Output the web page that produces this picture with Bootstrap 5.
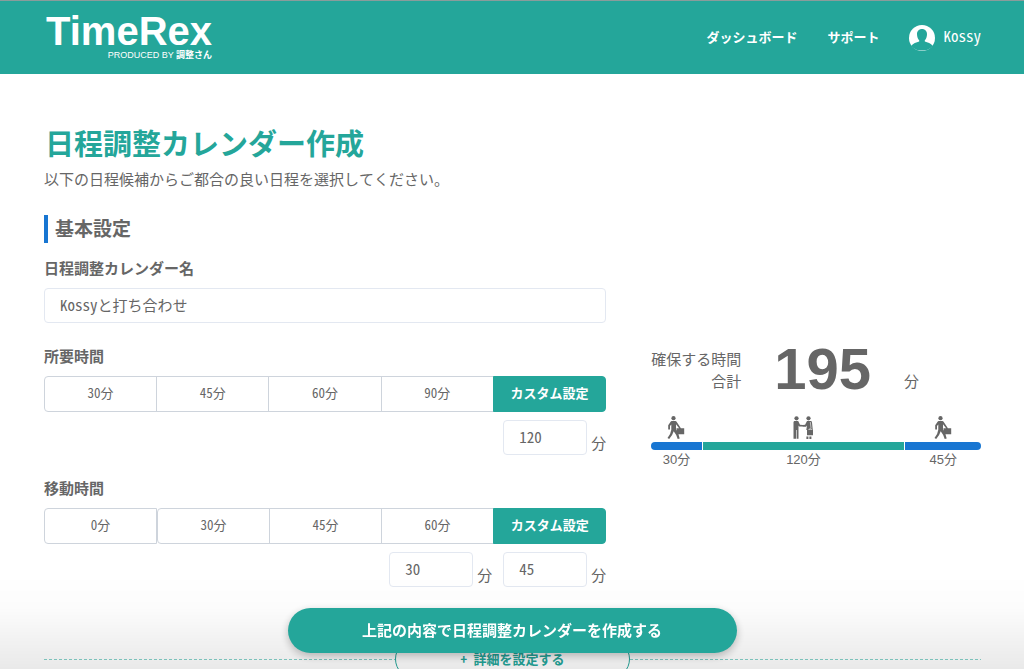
<!DOCTYPE html>
<html lang="ja">
<head>
<meta charset="utf-8">
<meta name="viewport" content="width=device-width, initial-scale=1">
<title>TimeRex</title>
<link href="https://cdn.jsdelivr.net/npm/bootstrap@5.3.0/dist/css/bootstrap.min.css" rel="stylesheet">
<style>
  :root { --rex: #24a69a; --rex-blue: #1876d2; --ink: #666; --edge: #ced4dc; }
  body { font-family: "Noto Sans Mono CJK JP", "Noto Sans CJK JP", sans-serif; font-size: 15px; line-height: 22px; font-weight: 500; color: var(--ink); }
  .latin { font-family: "Liberation Sans", "Noto Sans CJK JP", sans-serif; }
  .gutter { padding-left: 44px; padding-right: 43px; }
  .topbar { background: var(--rex); border-top: 1px solid #8a9c9b; height: 74px; }
  .topbar a { color: #fff; text-decoration: none; }
  .brand-link { padding: 0 0 2px 2px; }
  .brand-name { font-size: 40px; line-height: 36px; font-weight: 700; }
  .brand-sub { font-size: 9px; line-height: 12px; font-weight: 400; }
  .topnav { gap: 30px; }
  .nav-text { font-size: 13px; line-height: 20px; padding-bottom: 2px; font-weight: 700; }
  .user-name { padding-bottom: 4px; }
  .page { min-height: 0; scrollbar-width: none; padding-top: 50px; }
  .page::-webkit-scrollbar { display: none; }
  .page-title { font-size: 29px; line-height: 36px; font-weight: 700; color: var(--rex); padding-left: 1px; }
  .section-title { font-size: 19px; line-height: 26px; font-weight: 700; border-left: 4px solid var(--rex-blue); padding: 0 0 2px 7px; margin: 25px 0 14px; }
  .planner { display: grid; grid-template-columns: 3fr 2fr; }
  .field-title { font-size: 15px; line-height: 22px; font-weight: 700; margin: 0 0 9px; display: block; float: none; }
  .field { margin-bottom: 22px; }
  .form-control { height: 35px; font-size: 15px; font-weight: 500; color: var(--ink); border-color: #e3e8f1; border-radius: 4px; padding: 0 15px 2px; }
  .minutes { width: 84px; }
  .choices .btn { flex: 1 1 0; width: 0; height: 36px; padding: 5px 0 7px; font-size: 13px; line-height: 22px; font-weight: 500; color: var(--ink); border-color: var(--edge); background: #fff; border-radius: 4px; }
  .choices .btn-check:checked + .btn { background: var(--rex); border-color: var(--rex); color: #fff; font-weight: 700; }
  .choices .btn.lone { border-top-right-radius: 4px; border-bottom-right-radius: 4px; }
  .choices .btn.lone + .btn-check + .btn { border-top-left-radius: 4px; border-bottom-left-radius: 4px; margin-left: 0; }
  .customs { gap: 11px; margin-top: 8px; }
  .unit { gap: 4px; }
  .unit label { padding-bottom: 1px; }
  .summary { padding: 90px 0 0 45px; }
  .total { gap: 33px; }
  .total-num { font-size: 58px; line-height: 44px; font-weight: 700; padding-bottom: 1px; }
  .timeline { margin-top: 24px; gap: 1px; font-size: 13px; line-height: 20px; font-weight: 400; }
  .timeline .slot { flex-basis: 0; min-width: 0; text-align: center; }
  .timeline svg { display: block; height: 24px; margin: 0 auto 2px; fill: var(--ink); }
  .timeline .stripe { height: 8px; background: var(--rex-blue); }
  .timeline .meet .stripe { background: var(--rex); }
  .timeline .slot:first-child .stripe { border-radius: 4px 0 0 4px; }
  .timeline .slot:last-child .stripe { border-radius: 0 4px 4px 0; }
  .more { margin-top: 52px; }
  .more::before, .more::after { content: ""; flex: 1; height: 1px; background: repeating-linear-gradient(90deg, #86d2cb 0 3px, transparent 3px 5px); }
  .more-btn { width: 235px; height: 40px; border: 1px solid var(--rex); border-radius: 20px; color: var(--rex); background: #fff; font-size: 13px; font-weight: 700; }
  .submit-shade { padding: 34px 0 16px; background: linear-gradient(rgba(0,0,0,0), rgba(0,0,0,.01) 35%, rgba(0,0,0,.085)); }
  .submit-btn { width: 449px; height: 45px; padding-bottom: 2px; border: 0; border-radius: 23px; background: var(--rex); color: #fff; font-size: 15px; font-weight: 700; box-shadow: 0 3px 8px rgba(0,0,0,.25); }
</style>
</head>
<body class="vh-100 d-flex flex-column overflow-hidden">
<header class="topbar gutter d-flex justify-content-between align-items-center flex-shrink-0">
  <a href="#" class="brand-link latin text-end">
    <div class="brand-name">TimeRex</div>
    <div class="brand-sub">PRODUCED BY <b>調整さん</b></div>
  </a>
  <nav class="topnav d-flex align-items-center">
    <a href="#" class="nav-text">ダッシュボード</a>
    <a href="#" class="nav-text">サポート</a>
    <a href="#" class="d-flex align-items-center gap-2">
      <svg width="26" height="26" viewBox="0 0 26 26" aria-hidden="true"><circle cx="13" cy="13" r="13" fill="#fff"/><path d="M13 4c3 0 5 2.100 5 5.200 0 2.400-.9 4.800-2.200 6v1.300c2.800.8 6.200 1.800 8 4.500A13.200 13.200 0 0 1 13 25.500 13.200 13.200 0 0 1 2.200 21c1.800-2.700 5.200-3.700 8-4.500v-1.300C8.900 14 8 11.600 8 9.200 8 6.100 10 4 13 4z" fill="#24a69a"/></svg>
      <span class="user-name">Kossy</span>
    </a>
  </nav>
</header>

<main class="page gutter flex-fill overflow-auto">
  <h1 class="page-title mb-2">日程調整カレンダー作成</h1>
  <p class="mb-0">以下の日程候補からご都合の良い日程を選択してください。</p>
  <h2 class="section-title">基本設定</h2>

  <div class="planner">
    <form>
      <div class="field">
        <label class="field-title" for="calName">日程調整カレンダー名</label>
        <input class="form-control" id="calName" type="text" value="Kossyと打ち合わせ">
      </div>

      <fieldset class="field">
        <legend class="field-title">所要時間</legend>
        <div class="btn-group choices d-flex">
          <input class="btn-check" type="radio" name="dur" id="d30"><label class="btn" for="d30">30分</label>
          <input class="btn-check" type="radio" name="dur" id="d45"><label class="btn" for="d45">45分</label>
          <input class="btn-check" type="radio" name="dur" id="d60"><label class="btn" for="d60">60分</label>
          <input class="btn-check" type="radio" name="dur" id="d90"><label class="btn" for="d90">90分</label>
          <input class="btn-check" type="radio" name="dur" id="dc" checked><label class="btn" for="dc">カスタム設定</label>
        </div>
        <div class="customs d-flex justify-content-end">
          <div class="unit d-flex align-items-end"><input class="form-control minutes" id="durMin" type="text" value="120"><label for="durMin">分</label></div>
        </div>
      </fieldset>

      <fieldset>
        <legend class="field-title">移動時間</legend>
        <div class="btn-group choices d-flex">
          <input class="btn-check" type="radio" name="mov" id="m0"><label class="btn lone" for="m0">0分</label>
          <input class="btn-check" type="radio" name="mov" id="m30"><label class="btn" for="m30">30分</label>
          <input class="btn-check" type="radio" name="mov" id="m45"><label class="btn" for="m45">45分</label>
          <input class="btn-check" type="radio" name="mov" id="m60"><label class="btn" for="m60">60分</label>
          <input class="btn-check" type="radio" name="mov" id="mc" checked><label class="btn" for="mc">カスタム設定</label>
        </div>
        <div class="customs d-flex justify-content-end">
          <div class="unit d-flex align-items-end"><input class="form-control minutes" id="movA" type="text" value="30"><label for="movA">分</label></div>
          <div class="unit d-flex align-items-end"><input class="form-control minutes" id="movB" type="text" value="45"><label for="movB">分</label></div>
        </div>
      </fieldset>
    </form>

    <aside class="summary">
      <div class="total d-flex align-items-end">
        <div class="text-end">確保する時間<br>合計</div>
        <div class="total-num latin">195</div>
        <div>分</div>
      </div>
      <div class="timeline latin d-flex">
        <div class="slot" style="flex-grow:30">
          <svg width="18" viewBox="0 0 18 24" aria-hidden="true"><use href="#walker"/></svg>
          <div class="stripe"></div>30分
        </div>
        <div class="slot meet" style="flex-grow:120">
          <svg width="22" viewBox="0 0 22 24" aria-hidden="true">
            <circle cx="4.500" cy="2.300" r="2.100"/>
            <path d="M2.800 5h3.400L8 8.700l3 .3v1.600H7.200L6.500 9.500V22.800H4.700V14h-.6v8.800H1.500V6.500C1.500 5.500 2 5 2.800 5z"/>
            <circle cx="16.500" cy="2.300" r="2.100"/>
            <path d="M15 5h3.500c.9 0 1.300.5 1.500 1.400l.8 7.600H21v5.200h-6v-5.200h-.7L15 9.500l-1 1.200h-3.200V9l2.300-.3z"/>
            <path d="M14.400 20.500h2V23h-2zM17.400 20.500h2V23h-2z"/>
            <path d="M16.700 14c0-1.400 2.900-1.400 2.900 0" fill="none" stroke="#fff" stroke-width=".8"/>
            <path d="m18.300 6 .8 6.500" fill="none" stroke="#fff" stroke-width=".6"/>
          </svg>
          <div class="stripe"></div>120分
        </div>
        <div class="slot" style="flex-grow:45">
          <svg width="18" viewBox="0 0 18 24" aria-hidden="true">
            <g id="walker">
              <circle cx="6.500" cy="2.200" r="2.100"/>
              <path d="M4.700 5h3.600c.6 0 1 .3 1.300.8l4.300 6.400h3.300v6H9.500v-6h2.600L9 8.300v5.500l2.400 4.300 1.300 4.300-2 .6-1.500-4-2.500-3.700-1.600 3.700L2.200 23 .5 21.900l2.600-3.900 1.200-4.300V8.600L3 10v3.600H1.200V9.200L3.600 5.700c.3-.5.600-.7 1.100-.7z"/>
            </g>
          </svg>
          <div class="stripe"></div>45分
        </div>
      </div>
    </aside>
  </div>

  <div class="more d-flex align-items-center">
    <button type="button" class="more-btn">+ 詳細を設定する</button>
  </div>
</main>

<div class="submit-shade fixed-bottom d-flex justify-content-center">
  <button type="submit" class="submit-btn">上記の内容で日程調整カレンダーを作成する</button>
</div>
<script src="https://cdn.jsdelivr.net/npm/bootstrap@5.3.0/dist/js/bootstrap.bundle.min.js"></script>
</body>
</html>
